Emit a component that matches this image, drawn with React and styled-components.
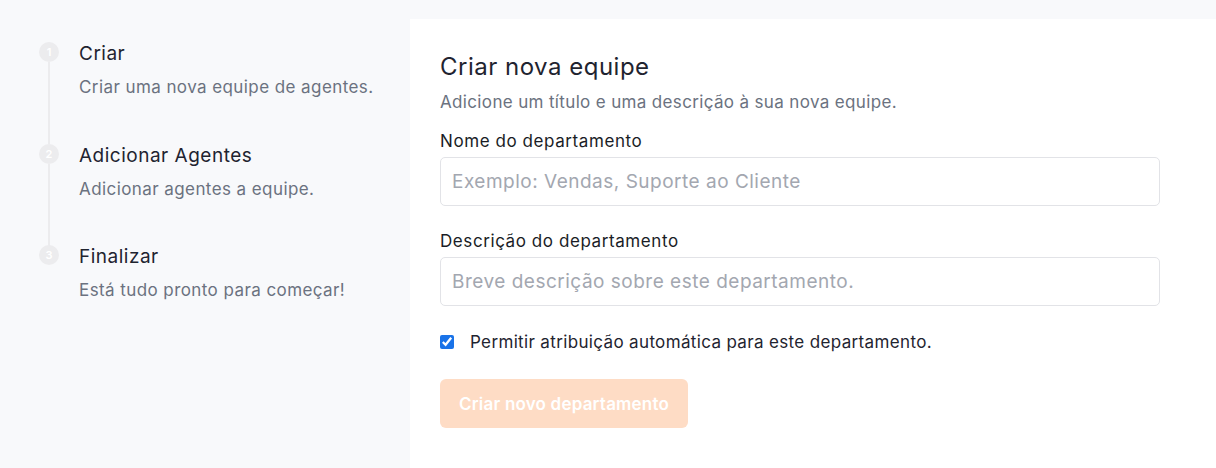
import React from "react";
import styled, { createGlobalStyle } from "styled-components";

const GlobalStyle = createGlobalStyle`
  html, body {
    margin: 0;
    padding: 0;
    background: #f8f9fb;
    font-family: "Inter", "Noto Sans", sans-serif;
    color: #1f2430;
  }
  * {
    box-sizing: border-box;
  }
`;

const Page = styled.div`
  display: flex;
  min-height: 468px;
  padding-top: 19px;
`;

const Sidebar = styled.aside`
  width: 410px;
  flex-shrink: 0;
  padding: 23px 0 0 39px;
`;

const StepList = styled.ol`
  list-style: none;
  margin: 0;
  padding: 0;
`;

const Step = styled.li`
  display: flex;
  gap: 20px;
  height: ${(p) => (p.$last ? "auto" : "101.5px")};
`;

const Track = styled.div`
  position: relative;
  width: 20px;
  display: flex;
  justify-content: center;

  &::after {
    content: "";
    display: ${(p) => (p.$last ? "none" : "block")};
    position: absolute;
    top: 20px;
    left: 9px;
    width: 2px;
    height: 82px;
    background: #ececee;
  }
`;

const Dot = styled.span`
  width: 20px;
  height: 20px;
  border-radius: 50%;
  background: #ececee;
  color: #fff;
  font-size: 11px;
  font-weight: 600;
  display: flex;
  align-items: center;
  justify-content: center;
`;

const StepText = styled.div`
  display: flex;
  flex-direction: column;
  gap: 10px;
`;

const StepTitle = styled.span`
  font-size: 19px;
  letter-spacing: 0.5px;
  line-height: 24px;
  color: #1f2430;
`;

const StepDesc = styled.span`
  font-size: 17px;
  letter-spacing: 0.42px;
  line-height: 22px;
  color: #6b7280;
`;

const Panel = styled.main`
  flex: 1;
  background: #fff;
  padding: 32px 56px 40px 30px;
`;

const Title = styled.h2`
  margin: 0;
  font-size: 24px;
  font-weight: 400;
  letter-spacing: 0.5px;
  line-height: 32px;
  color: #1f2430;
`;

const Subtitle = styled.p`
  margin: 8px 0 0;
  font-size: 17px;
  letter-spacing: 0.35px;
  line-height: 22px;
  color: #6b7280;
`;

const Field = styled.label`
  display: flex;
  flex-direction: column;
  gap: 5px;
  margin-top: ${(p) => p.$top || "17px"};
`;

const Label = styled.span`
  font-size: 17px;
  font-weight: 420;
  letter-spacing: 0.58px;
  line-height: 22px;
  color: #1a1d26;
`;

const Input = styled.input`
  height: 49px;
  width: 720px;
  border: 1px solid #e2e3e7;
  border-radius: 5px;
  padding: 0 11px;
  font-family: inherit;
  font-size: 19px;
  letter-spacing: 0.5px;
  color: #1f2430;
  outline: none;

  &::placeholder {
    color: #a3a7b0;
  }
`;

const CheckRow = styled.label`
  display: flex;
  align-items: center;
  gap: 16px;
  margin-top: 26px;
  font-size: 17px;
  letter-spacing: 0.35px;
  color: #1f2430;

  input {
    margin: 0;
    width: 14px;
    height: 14px;
    accent-color: #1a73e8;
  }
`;

const Button = styled.button`
  margin-top: 27px;
  height: 49px;
  padding: 0 19px;
  border: none;
  border-radius: 6px;
  background: #fedcc5;
  color: #fff;
  font-family: inherit;
  font-size: 17px;
  font-weight: 600;
  letter-spacing: 0.2px;
`;

const steps = [
  { n: 1, title: "Criar", desc: "Criar uma nova equipe de agentes." },
  { n: 2, title: "Adicionar Agentes", desc: "Adicionar agentes a equipe." },
  { n: 3, title: "Finalizar", desc: "Está tudo pronto para começar!" },
];

export default function App() {
  return (
    <>
      <GlobalStyle />
      <Page>
        <Sidebar>
          <StepList>
            {steps.map((s, i) => {
              const last = i === steps.length - 1;
              return (
                <Step key={s.n} $last={last}>
                  <Track $last={last}>
                    <Dot>{s.n}</Dot>
                  </Track>
                  <StepText>
                    <StepTitle>{s.title}</StepTitle>
                    <StepDesc>{s.desc}</StepDesc>
                  </StepText>
                </Step>
              );
            })}
          </StepList>
        </Sidebar>
        <Panel>
          <Title>Criar nova equipe</Title>
          <Subtitle>Adicione um título e uma descrição à sua nova equipe.</Subtitle>
          <Field>
            <Label>Nome do departamento</Label>
            <Input placeholder="Exemplo: Vendas, Suporte ao Cliente" />
          </Field>
          <Field $top="24px">
            <Label>Descrição do departamento</Label>
            <Input placeholder="Breve descrição sobre este departamento." />
          </Field>
          <CheckRow>
            <input type="checkbox" defaultChecked />
            Permitir atribuição automática para este departamento.
          </CheckRow>
          <Button disabled>Criar novo departamento</Button>
        </Panel>
      </Page>
    </>
  );
}
